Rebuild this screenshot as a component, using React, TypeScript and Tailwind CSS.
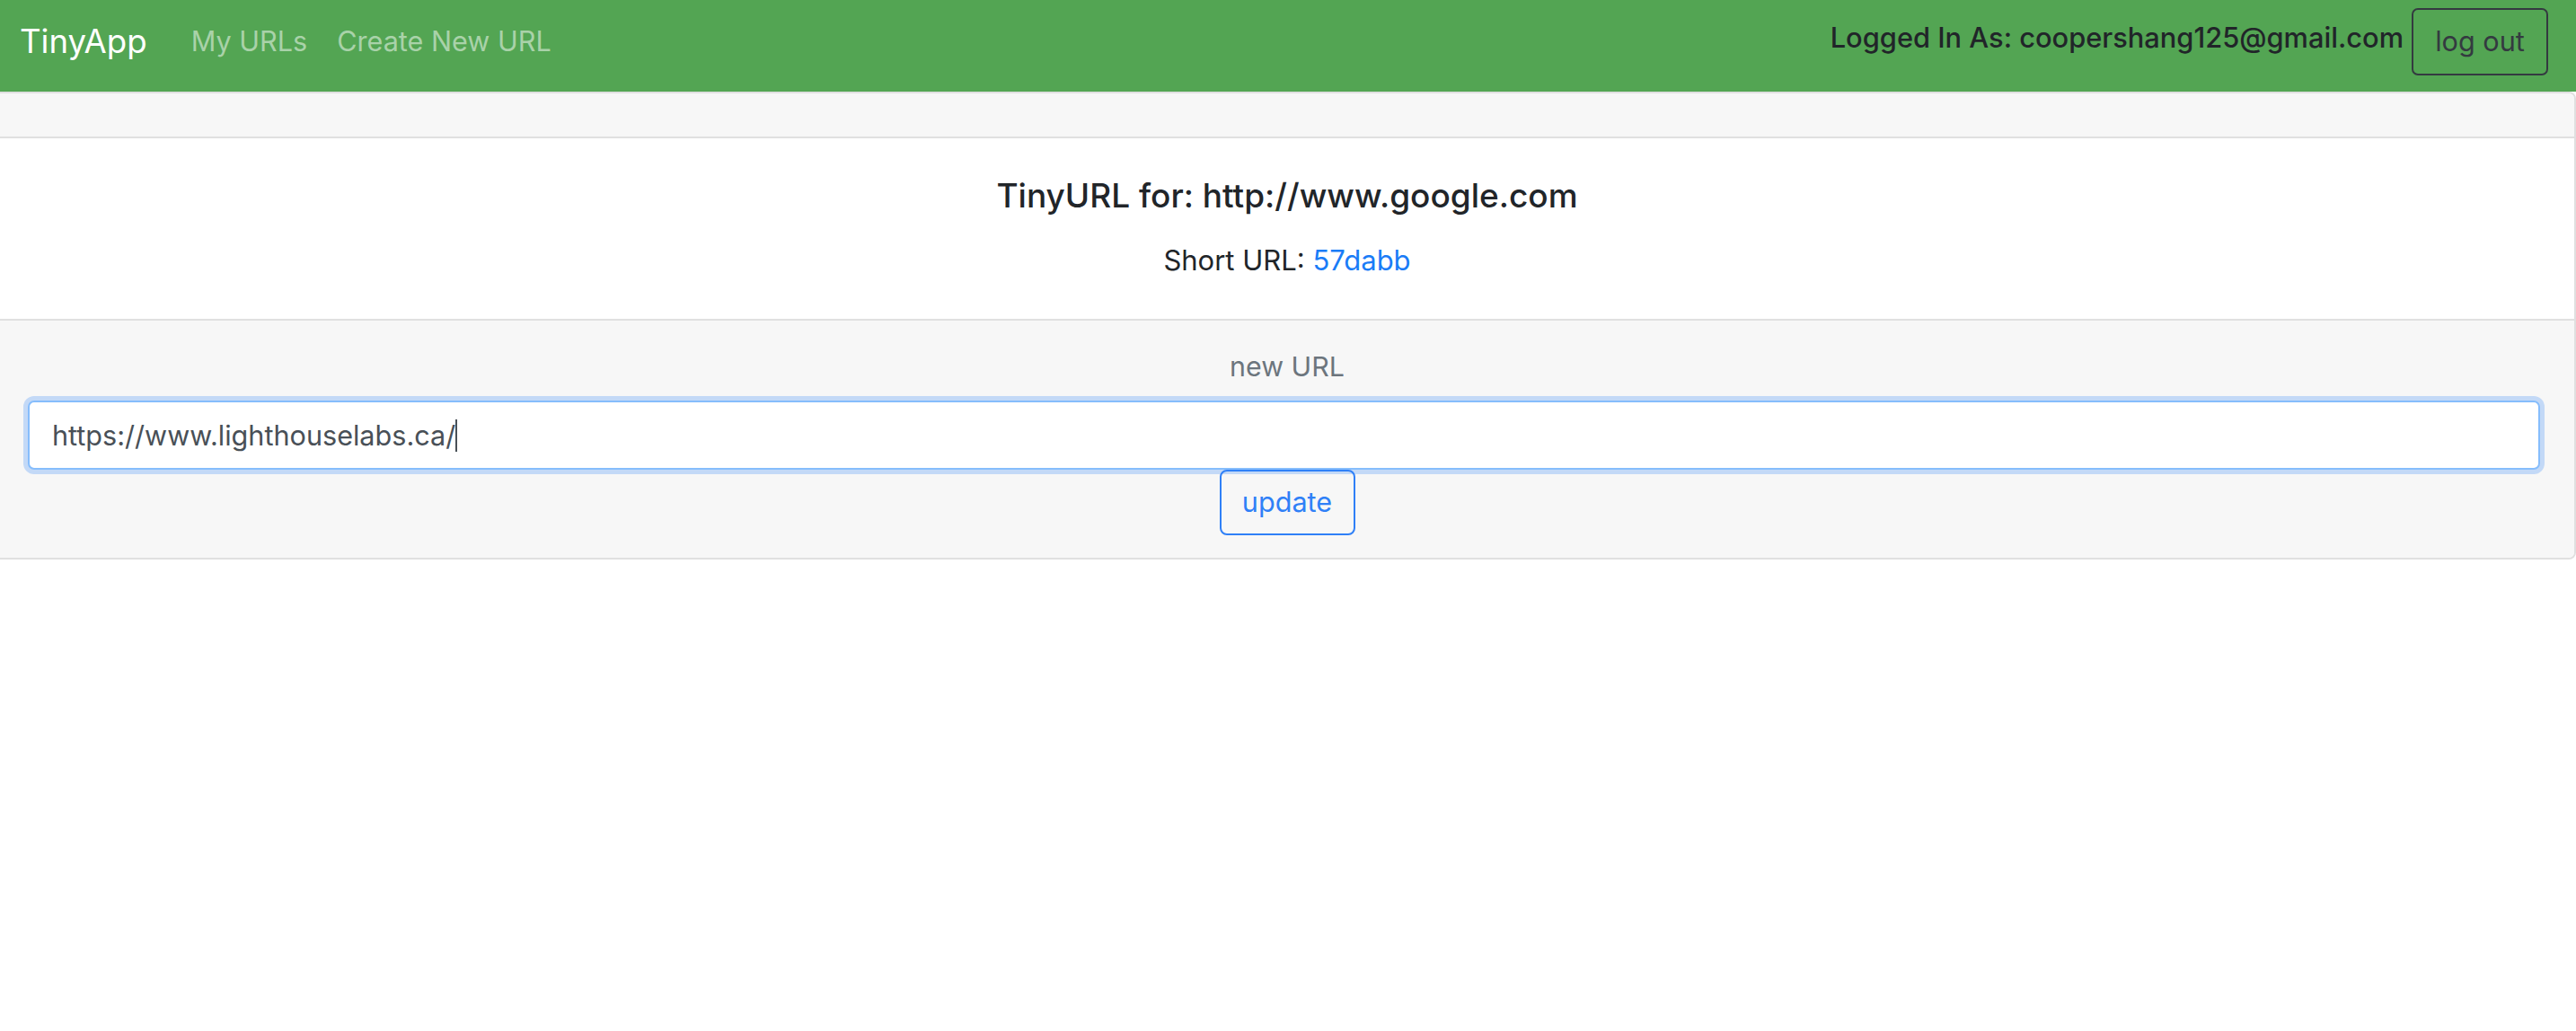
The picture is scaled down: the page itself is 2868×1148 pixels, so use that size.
import React from 'react'

const shortId = '57dabb'
const longUrl = 'http://www.google.com'

const Navbar = () => {
  return (
    <nav className="h-[102px] bg-[#53a553] flex items-center justify-between pl-[22px] pr-[31px] pb-[9px]">
      <div className="flex items-center">
        <a href="#" className="text-[36.6px] leading-none text-white mr-[49px]">TinyApp</a>
        <a href="#" className="text-[30.6px] leading-none text-[#a9d2a9] mr-[33px]">My URLs</a>
        <a href="#" className="text-[30.6px] leading-none text-[#a9d2a9]">Create New URL</a>
      </div>
      <div className="flex items-center gap-[9px]">
        <span className="text-[30.8px] leading-none text-[#212529] font-medium -mt-[9px]">Logged In As: coopershang125@gmail.com</span>
        <button className="w-[152px] h-[75px] border-2 border-[#343a40] rounded-[7px] text-[30.6px] text-[#343a40] leading-none">log out</button>
      </div>
    </nav>
  )
}

const App = () => {
  return (
    <div className="min-h-[1148px] bg-white font-['Inter',sans-serif] text-[#212529]">
      <Navbar/>
      <div className="border-2 border-l-0 border-[#e0e0e0] rounded-r-[8px] overflow-hidden">
        <div className="h-[50px] bg-[#f7f7f7] border-b-2 border-[#e0e0e0]"/>
        <div className="bg-white text-center pt-[42px] pb-[43px] border-b-2 border-[#e0e0e0]">
          <h5 className="text-[37px] font-medium leading-[44px]">TinyURL for: {longUrl}</h5>
          <p className="mt-[28px] text-[31px] leading-[44px]">Short URL: <a href="#" className="text-[#1a7cf7]">{shortId}</a></p>
        </div>
        <div className="bg-[#f7f7f7] pt-[29px] pb-[25px] flex flex-col items-center">
          <label className="text-[30.4px] leading-[44px] text-[#6c757d]">new URL</label>
          <div className="self-stretch ml-[31px] mr-[38px] mt-[16px] h-[77px] bg-white border-2 border-[#86bdfc] rounded-[7px] shadow-[0_0_0_5px_#c3d9f7] flex items-center pl-[25px] text-[30.6px] text-[#495057]">
            <span>https://www.lighthouselabs.ca/</span>
            <span className="w-[2px] h-[36px] bg-[#495057]"/>
          </div>
          <button className="w-[151px] h-[73px] border-2 border-[#2f80f7] rounded-[8px] text-[30.6px] text-[#2f80f7] leading-none">update</button>
        </div>
      </div>
    </div>
  )
}

export default App
